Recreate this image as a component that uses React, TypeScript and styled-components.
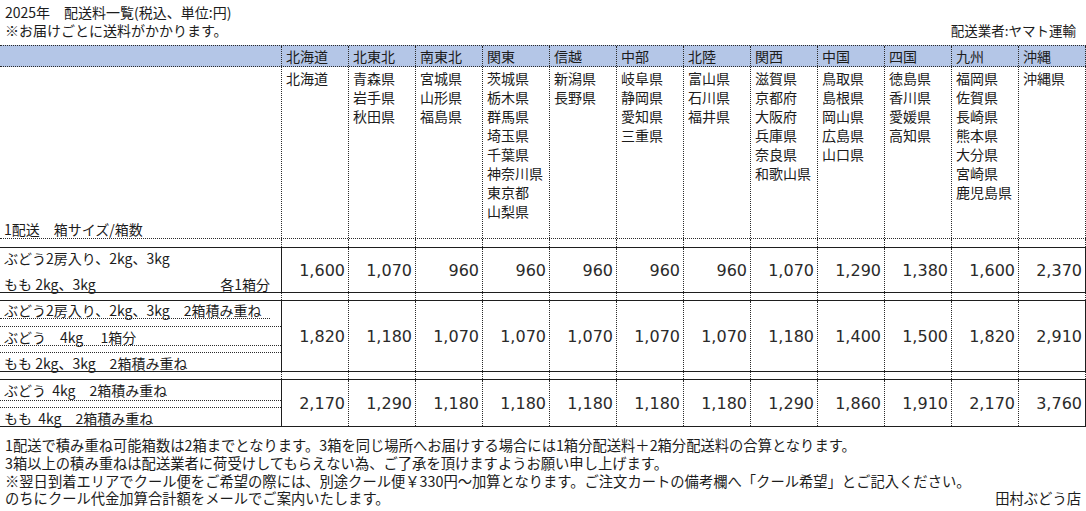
import React from "react";
import styled, { createGlobalStyle } from "styled-components";

const GlobalStyle = createGlobalStyle`
  html, body { margin: 0; padding: 0; background: #ffffff; }
  body {
    font-family: "Noto Sans CJK JP", "Noto Sans", sans-serif;
    color: #1c1c1c;
  }
`;

const COLS = "282px repeat(12, 67px)";
const DOT = "1px dotted #2b2b2b";
const SOLID = "1px solid #1e1e1e";

const Page = styled.div`
  width: 1086px;
  height: 511px;
  overflow: hidden;
`;

const TitleBlock = styled.header`
  box-sizing: border-box;
  height: 45px;
  padding: 3px 10px 0 5px;
  font-size: 14px;
  line-height: 18px;
  white-space: pre;
`;

const TitleRow = styled.div`
  display: flex;
  justify-content: space-between;
`;

const Carrier = styled.span`
  font-size: 13.5px;
`;

const HeaderBand = styled.div`
  display: grid;
  grid-template-columns: ${COLS};
  background: #b4c6e7;
  border-top: ${DOT};
  border-bottom: ${DOT};
`;

const HeadCell = styled.div`
  box-sizing: border-box;
  height: 20px;
  line-height: 20px;
  padding-left: 4px;
  font-size: 14px;
  border-right: ${DOT};
`;

const PrefRow = styled.div`
  display: grid;
  grid-template-columns: ${COLS};
  border-bottom: ${DOT};
`;

const PrefCell = styled.div`
  box-sizing: border-box;
  height: 171px;
  padding: 2px 0 0 4px;
  display: flex;
  flex-direction: column;
  font-size: 14px;
  line-height: 19px;
  border-right: ${DOT};
`;

const SizeLabel = styled.div`
  box-sizing: border-box;
  height: 171px;
  display: flex;
  align-items: flex-end;
  padding: 0 0 1px 4px;
  font-size: 14px;
  line-height: 16px;
  white-space: pre;
  border-right: ${DOT};
`;

const GapRow = styled.div`
  display: grid;
  grid-template-columns: ${COLS};
`;

const GapCell = styled.div<{ $h: number }>`
  box-sizing: border-box;
  height: ${(p) => p.$h}px;
  border-right: ${DOT};
`;

const DataRow = styled.div`
  display: grid;
  grid-template-columns: ${COLS};
  border-top: ${SOLID};
  border-bottom: ${SOLID};
`;

const LabelCell = styled.div`
  box-sizing: border-box;
  display: flex;
  flex-direction: column;
  border-right: ${SOLID};
  font-size: 14px;
`;

const SubRow = styled.div<{
  $h: number;
  $dotted?: boolean;
  $short?: boolean;
  $align?: "center" | "end";
}>`
  box-sizing: border-box;
  height: ${(p) => p.$h}px;
  display: flex;
  align-items: ${(p) => (p.$align === "center" ? "center" : "flex-end")};
  justify-content: space-between;
  padding: 0 11px 0 4px;
  margin-right: ${(p) => (p.$short ? "11px" : "0")};
  line-height: 15px;
  white-space: pre;
  border-bottom: ${(p) => (p.$dotted ? DOT : "none")};
`;

const PriceCell = styled.div<{ $last?: boolean }>`
  box-sizing: border-box;
  display: flex;
  align-items: center;
  justify-content: flex-end;
  padding-right: 3px;
  font-family: "DejaVu Sans", "Liberation Sans", sans-serif;
  font-size: 16px;
  color: #2a2a2a;
  border-right: ${(p) => (p.$last ? SOLID : DOT)};
`;

const Footer = styled.footer`
  padding: 9px 5px 0 5px;
  font-size: 14.3px;
  line-height: 17.8px;
  white-space: nowrap;
`;

const FooterRow = styled.div`
  display: flex;
  justify-content: space-between;
`;

const regions: { name: string; prefs: string[] }[] = [
  { name: "北海道", prefs: ["北海道"] },
  { name: "北東北", prefs: ["青森県", "岩手県", "秋田県"] },
  { name: "南東北", prefs: ["宮城県", "山形県", "福島県"] },
  {
    name: "関東",
    prefs: ["茨城県", "栃木県", "群馬県", "埼玉県", "千葉県", "神奈川県", "東京都", "山梨県"],
  },
  { name: "信越", prefs: ["新潟県", "長野県"] },
  { name: "中部", prefs: ["岐阜県", "静岡県", "愛知県", "三重県"] },
  { name: "北陸", prefs: ["富山県", "石川県", "福井県"] },
  { name: "関西", prefs: ["滋賀県", "京都府", "大阪府", "兵庫県", "奈良県", "和歌山県"] },
  { name: "中国", prefs: ["鳥取県", "島根県", "岡山県", "広島県", "山口県"] },
  { name: "四国", prefs: ["徳島県", "香川県", "愛媛県", "高知県"] },
  { name: "九州", prefs: ["福岡県", "佐賀県", "長崎県", "熊本県", "大分県", "宮崎県", "鹿児島県"] },
  { name: "沖縄", prefs: ["沖縄県"] },
];

const prices: string[][] = [
  ["1,600", "1,070", "960", "960", "960", "960", "960", "1,070", "1,290", "1,380", "1,600", "2,370"],
  ["1,820", "1,180", "1,070", "1,070", "1,070", "1,070", "1,070", "1,180", "1,400", "1,500", "1,820", "2,910"],
  ["2,170", "1,290", "1,180", "1,180", "1,180", "1,180", "1,180", "1,290", "1,860", "1,910", "2,170", "3,760"],
];

const Gap: React.FC<{ h: number }> = ({ h }) => (
  <GapRow>
    {Array.from({ length: 13 }).map((_, i) => (
      <GapCell key={i} $h={h} />
    ))}
  </GapRow>
);

const Prices: React.FC<{ values: string[] }> = ({ values }) => (
  <>
    {values.map((v, i) => (
      <PriceCell key={i} $last={i === values.length - 1}>
        {v}
      </PriceCell>
    ))}
  </>
);

export default function App() {
  return (
    <Page>
      <GlobalStyle />
      <TitleBlock>
        <div>2025年　配送料一覧(税込、単位:円)</div>
        <TitleRow>
          <span>※お届けごとに送料がかかります。</span>
          <Carrier>配送業者:ヤマト運輸</Carrier>
        </TitleRow>
      </TitleBlock>

      <HeaderBand>
        <HeadCell />
        {regions.map((r) => (
          <HeadCell key={r.name}>{r.name}</HeadCell>
        ))}
      </HeaderBand>
      <PrefRow>
        <SizeLabel>1配送　箱サイズ/箱数</SizeLabel>
        {regions.map((r) => (
          <PrefCell key={r.name}>
            {r.prefs.map((p) => (
              <span key={p}>{p}</span>
            ))}
          </PrefCell>
        ))}
      </PrefRow>

      <Gap h={8} />
      <DataRow>
        <LabelCell>
          <SubRow $h={20} $align="center">
            ぶどう2房入り、2kg、3kg
          </SubRow>
          <SubRow $h={24}>
            <span>もも 2kg、3kg</span>
            <span>各1箱分</span>
          </SubRow>
        </LabelCell>
        <Prices values={prices[0]} />
      </DataRow>

      <Gap h={7} />
      <DataRow>
        <LabelCell>
          <SubRow $h={18} $dotted $short>
            ぶどう2房入り、2kg、3kg　2箱積み重ね
          </SubRow>
          <SubRow $h={8} $dotted />
          <SubRow $h={19} $dotted>
            ぶどう　4kg　 1箱分
          </SubRow>
          <SubRow $h={7} $dotted />
          <SubRow $h={18}>もも 2kg、3kg　2箱積み重ね</SubRow>
        </LabelCell>
        <Prices values={prices[1]} />
      </DataRow>

      <Gap h={7} />
      <DataRow>
        <LabelCell>
          <SubRow $h={21} $dotted $align="center">
            ぶどう  4kg　2箱積み重ね
          </SubRow>
          <SubRow $h={7} $dotted />
          <SubRow $h={18}>もも  4kg　2箱積み重ね</SubRow>
        </LabelCell>
        <Prices values={prices[2]} />
      </DataRow>

      <Footer>
        <div>
          1配送で積み重ね可能箱数は2箱までとなります。3箱を同じ場所へお届けする場合には1箱分配送料＋2箱分配送料の合算となります。
        </div>
        <div>3箱以上の積み重ねは配送業者に荷受けしてもらえない為、ご了承を頂けますようお願い申し上げます。</div>
        <div>
          ※翌日到着エリアでクール便をご希望の際には、別途クール便￥330円～加算となります。ご注文カートの備考欄へ「クール希望」とご記入ください。
        </div>
        <FooterRow>
          <span>のちにクール代金加算合計額をメールでご案内いたします。</span>
          <span>田村ぶどう店</span>
        </FooterRow>
      </Footer>
    </Page>
  );
}
